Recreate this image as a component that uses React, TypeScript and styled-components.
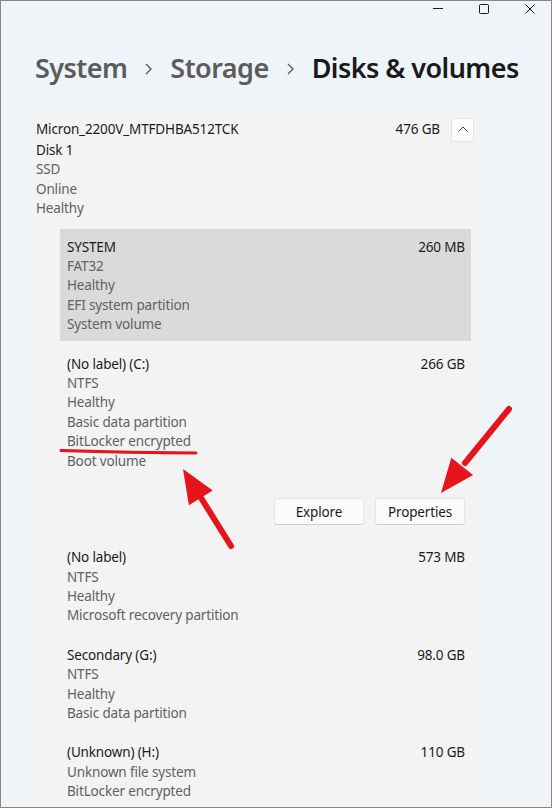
import React from "react";
import styled, { createGlobalStyle } from "styled-components";

const GlobalStyle = createGlobalStyle`
  html, body { margin: 0; padding: 0; background: #eff4f9; }
  body { font-family: "Noto Sans", "Open Sans", sans-serif; }
  * { box-sizing: border-box; }
`;

const Window = styled.div`
  position: relative;
  width: 552px;
  height: 808px;
  border: 1px solid #868686;
  background: #eff4f9;
  overflow: hidden;
  font-family: "Noto Sans", "Open Sans", sans-serif;
  color: #1b1b1b;
`;

const TitleBar = styled.div`
  display: flex;
  justify-content: flex-end;
  height: 16px;
  margin-right: -2px;
`;

const CaptionButton = styled.div`
  width: 46px;
  height: 16px;
  display: flex;
  align-items: center;
  justify-content: center;
  color: #1a1a1a;
`;

const Breadcrumb = styled.div`
  display: flex;
  align-items: center;
  gap: 18px;
  margin: 31px 0 0 34px;
  height: 40px;
  font-size: 27px;
  font-weight: 600;
  letter-spacing: -0.55px;
  line-height: 40px;
  white-space: nowrap;
`;

const Crumb = styled.span<{ $current?: boolean }>`
  color: ${(p) => (p.$current ? "#1a1a1a" : "#5c5c5c")};
`;

const CrumbChevron = styled.svg`
  flex: none;
  margin-top: 2px;
`;

const Panel = styled.div`
  display: flex;
  flex-direction: column;
  margin: 23px 0 0 29px;
  width: 451px;
  padding: 9px 7px 0 6px;
  background: #f3f3f3;
  min-height: 720px;
`;

const DiskHeader = styled.div`
  display: flex;
  align-items: flex-start;
  height: 21px;
`;

const Line = styled.div<{ $muted?: boolean }>`
  font-size: 13.5px;
  letter-spacing: -0.15px;
  line-height: 19.4px;
  color: ${(p) => (p.$muted ? "#616161" : "#1b1b1b")};
  white-space: nowrap;
`;

const DiskName = styled(Line)`
  flex: 1;
`;

const DiskSize = styled(Line)`
  margin-right: 11px;
`;

const CollapseButton = styled.div`
  width: 23px;
  height: 24px;
  margin-top: -2px;
  display: flex;
  align-items: center;
  justify-content: center;
  background: #fcfcfc;
  border: 1px solid #e4e4e4;
  border-radius: 2px;
  padding-bottom: 3px;
`;

const VolumeList = styled.div`
  display: flex;
  flex-direction: column;
  gap: 5px;
  margin: 10px 3px 0 24px;
`;

const Volume = styled.div<{ $selected?: boolean }>`
  padding: 9px 6px 6px 7px;
  background: ${(p) => (p.$selected ? "#dadada" : "transparent")};
`;

const VolumeTop = styled.div`
  display: flex;
  justify-content: space-between;
`;

const Actions = styled.div`
  display: flex;
  justify-content: flex-end;
  gap: 11px;
  margin: 27px 0 3px;
`;

const ActionButton = styled.div`
  width: 90px;
  height: 27px;
  display: flex;
  align-items: center;
  justify-content: center;
  font-size: 13.5px;
  letter-spacing: -0.15px;
  color: #1b1b1b;
  background: #fbfbfb;
  border: 1px solid #e5e5e5;
  border-bottom-color: #d0d0d0;
  border-radius: 3px;
`;

const Annotations = styled.svg`
  position: absolute;
  left: -1px;
  top: -1px;
  pointer-events: none;
`;

type Vol = {
  name: string;
  size: string;
  lines: string[];
  selected?: boolean;
  actions?: boolean;
};

const volumes: Vol[] = [
  { name: "SYSTEM", size: "260 MB", lines: ["FAT32", "Healthy", "EFI system partition", "System volume"], selected: true },
  {
    name: "(No label) (C:)",
    size: "266 GB",
    lines: ["NTFS", "Healthy", "Basic data partition", "BitLocker encrypted", "Boot volume"],
    actions: true,
  },
  { name: "(No label)", size: "573 MB", lines: ["NTFS", "Healthy", "Microsoft recovery partition"] },
  { name: "Secondary (G:)", size: "98.0 GB", lines: ["NTFS", "Healthy", "Basic data partition"] },
  { name: "(Unknown) (H:)", size: "110 GB", lines: ["Unknown file system", "BitLocker encrypted"] },
];

const Chevron = () => (
  <CrumbChevron width="7" height="12" viewBox="0 0 7 12">
    <polyline points="1,1 6,6 1,11" fill="none" stroke="#5c5c5c" strokeWidth="1.4" />
  </CrumbChevron>
);

const RED = "#e5141d";

export default function App() {
  return (
    <>
      <GlobalStyle />
      <Window>
        <TitleBar>
          <CaptionButton>
            <svg width="10" height="10" viewBox="0 0 10 10">
              <line x1="0" y1="4.5" x2="10" y2="4.5" stroke="currentColor" strokeWidth="1" />
            </svg>
          </CaptionButton>
          <CaptionButton>
            <svg width="10" height="10" viewBox="0 0 10 10">
              <rect x="0.5" y="0.5" width="9" height="9" rx="1" fill="none" stroke="currentColor" strokeWidth="1" />
            </svg>
          </CaptionButton>
          <CaptionButton>
            <svg width="10" height="10" viewBox="0 0 10 10">
              <path d="M0.5 0.5 L9.5 9.5 M9.5 0.5 L0.5 9.5" stroke="currentColor" strokeWidth="1" />
            </svg>
          </CaptionButton>
        </TitleBar>

        <Breadcrumb>
          <Crumb>System</Crumb>
          <Chevron />
          <Crumb>Storage</Crumb>
          <Chevron />
          <Crumb $current>Disks &amp; volumes</Crumb>
        </Breadcrumb>

        <Panel>
          <DiskHeader>
            <DiskName>Micron_2200V_MTFDHBA512TCK</DiskName>
            <DiskSize>476 GB</DiskSize>
            <CollapseButton>
              <svg width="10" height="6" viewBox="0 0 10 6">
                <polyline points="0.5,5.5 5,1 9.5,5.5" fill="none" stroke="#444" strokeWidth="1" />
              </svg>
            </CollapseButton>
          </DiskHeader>
          <Line>Disk 1</Line>
          <Line $muted>SSD</Line>
          <Line $muted>Online</Line>
          <Line $muted>Healthy</Line>

          <VolumeList>
            {volumes.map((v) => (
              <Volume key={v.name} $selected={v.selected}>
                <VolumeTop>
                  <Line>{v.name}</Line>
                  <Line>{v.size}</Line>
                </VolumeTop>
                {v.lines.map((l, i) => (
                  <Line key={i} $muted>
                    {l}
                  </Line>
                ))}
                {v.actions && (
                  <Actions>
                    <ActionButton>Explore</ActionButton>
                    <ActionButton>Properties</ActionButton>
                  </Actions>
                )}
              </Volume>
            ))}
          </VolumeList>
        </Panel>

        <Annotations width="552" height="808" viewBox="0 0 552 808">
          <path d="M61 450.5 Q130 452.5 196 453" fill="none" stroke={RED} strokeWidth="3" strokeLinecap="round" />
          <line x1="231" y1="546" x2="198" y2="493" stroke={RED} strokeWidth="6" strokeLinecap="round" />
          <polygon points="183,469 212.7,490.6 188.9,505.2" fill={RED} />
          <line x1="509" y1="409" x2="465" y2="463" stroke={RED} strokeWidth="6" strokeLinecap="round" />
          <polygon points="441,493 451.3,457.7 473.1,475.1" fill={RED} />
        </Annotations>
      </Window>
    </>
  );
}
